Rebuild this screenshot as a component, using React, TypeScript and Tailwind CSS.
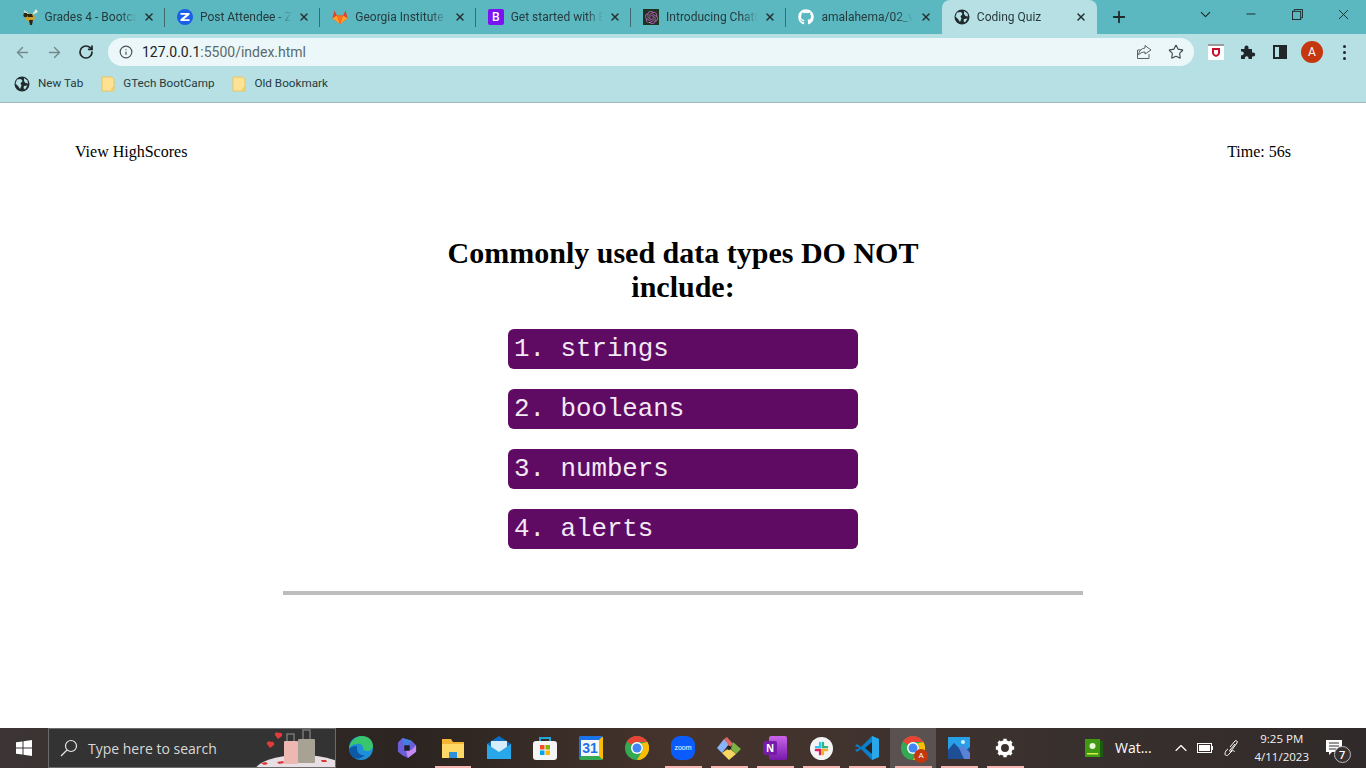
import { FC, ReactNode } from 'react';
import { FaGithub } from 'react-icons/fa';
import { SiOpenai } from 'react-icons/si';
import { ArrowLeft, ArrowRight, ChevronDown, ChevronUp, Info, Minus, Plus, RotateCw, Star, X } from 'lucide-react';

const Globe: FC = () => (
  <svg viewBox="0 0 16 16" className="h-4 w-4 shrink-0">
    <circle cx="8" cy="8" r="7.5" fill="#202b2d" />
    <path d="M3 3.500 7 3 8.500 5 6.500 7.500 7.500 9.500 6 13 4 10 1.500 7.500ZM10 2l3.500 2.500.5 3-2.500-.5L10 5ZM10 10l3.500-.5L11 13.500 9.500 12Z" fill="#b7e0e4" />
  </svg>
);

const Bee: FC = () => (
  <svg viewBox="0 0 16 16" className="h-4 w-4 shrink-0">
    <path d="M2 1 7 5 3 5ZM14 0 16 3 10 6Z" fill="#e9edd8" />
    <ellipse cx="8" cy="8.500" rx="5" ry="4" fill="#c9a02f" />
    <path d="M5 5h5l1 3H6ZM7 11h4l-1 5H8Z" fill="#2a2413" />
    <circle cx="3.500" cy="6" r="2.200" fill="#2a2413" />
  </svg>
);

const Zoomish: FC = () => (
  <svg viewBox="0 0 16 16" className="h-4 w-4 shrink-0">
    <circle cx="8" cy="8" r="8" fill="#1b5fe8" />
    <path d="M3.500 4h9v1.800L7 10.200h5.500V12h-9v-1.800L9 5.800H3.500Z" fill="#fff" />
  </svg>
);

const Gitlab: FC = () => (
  <svg viewBox="0 0 16 16" className="h-4 w-4 shrink-0">
    <path d="M8 15 .3 9.200 2.500 1.500 5 6.500h6l2.500-5L15.700 9.200Z" fill="#e24329" />
    <path d="M8 15 .3 9.200 5 6.500Z" fill="#fca326" />
    <path d="M8 15 15.700 9.200 11 6.500Z" fill="#fca326" />
    <path d="M8 15 5 6.500h6Z" fill="#fc6d26" />
  </svg>
);

const Boot: FC = () => (
  <div className="flex h-4 w-4 shrink-0 items-center justify-center rounded-[2px] bg-[#7b12f0] font-['Open_Sans',sans-serif] text-[12px] leading-none font-semibold text-white">
    B
  </div>
);

const Gpt: FC = () => (
  <div className="flex h-4 w-4 shrink-0 items-center justify-center bg-[#1d3320]">
    <SiOpenai className="h-[13px] w-[13px] text-[#b65fb5]" />
  </div>
);

const Tab: FC<{ icon: ReactNode; title: string; active?: boolean; sep?: boolean }> = ({ icon, title, active, sep }) => (
  <div
    className={`relative flex h-[34px] w-[155.4px] shrink-0 items-center pr-[10px] pl-3 ${active ? 'rounded-t-lg bg-[#b7e0e4]' : ''}`}
  >
    {icon}
    <span className="ml-[7px] w-[92px] overflow-hidden text-[12px] whitespace-nowrap text-[#263a3d] [mask-image:linear-gradient(90deg,#000_82%,transparent)]">
      {title}
    </span>
    <X className="ml-auto h-3 w-3 text-[#263033]" strokeWidth={3} />
    {sep && <div className="absolute top-2 right-0 h-[19px] w-px bg-[#3f6a6e]" />}
  </div>
);

const tabs = [
  { icon: <Bee />, title: 'Grades 4 - Bootcamp' },
  { icon: <Zoomish />, title: 'Post Attendee - Zoom' },
  { icon: <Gitlab />, title: 'Georgia Institute of' },
  { icon: <Boot />, title: 'Get started with Bootstrap' },
  { icon: <Gpt />, title: 'Introducing ChatGPT' },
  { icon: <FaGithub className="h-4 w-4 shrink-0 text-white" />, title: 'amalahema/02_web' },
];

const WinBtn: FC<{ children: ReactNode }> = ({ children }) => (
  <div className="flex h-[28px] w-[46px] items-center justify-center">{children}</div>
);

const TabStrip: FC = () => (
  <div className="flex h-[34px] items-center bg-[#5cb8c0] pl-[9.500px]">
    {tabs.map((t, i) => (
      <Tab key={t.title} icon={t.icon} title={t.title} sep={i < 5} />
    ))}
    <Tab icon={<Globe />} title="Coding Quiz" active />
    <Plus className="ml-[13px] h-[18px] w-[18px] text-[#1f2a2c]" strokeWidth={2.4} />
    <div className="ml-auto flex h-full items-start">
      <WinBtn>
        <ChevronDown className="h-[17px] w-[17px] text-[#1a2426]" strokeWidth={1.5} />
      </WinBtn>
      <WinBtn>
        <Minus className="h-4 w-[14px] text-[#1a2426]" strokeWidth={1.6} />
      </WinBtn>
      <WinBtn>
        <svg viewBox="0 0 12 12" className="h-[11px] w-[11px]" fill="none" stroke="#1a2426">
          <rect x=".5" y="2.500" width="9" height="9" />
          <path d="M2.500 2.500V.5h9v9h-2" />
        </svg>
      </WinBtn>
      <WinBtn>
        <X className="h-[17px] w-[17px] text-[#1a2426]" strokeWidth={1.3} />
      </WinBtn>
    </div>
  </div>
);

const Toolbar: FC = () => (
  <div className="flex h-[32px] items-center bg-[#b7e0e4] pt-1">
    <div className="flex w-[108px] items-center pl-[14px]">
      <ArrowLeft className="h-[17px] w-[17px] text-[#75898c]" strokeWidth={2} />
      <ArrowRight className="ml-[15px] h-[17px] w-[17px] text-[#75898c]" strokeWidth={2} />
      <RotateCw className="ml-[15px] h-4 w-4 text-[#20282a]" strokeWidth={2.6} />
    </div>
    <div className="flex h-[28px] w-[1086px] items-center rounded-full bg-[#ebf7f8] pr-[10px] pl-[11px]">
      <Info className="h-[14px] w-[14px] text-[#4a5254]" strokeWidth={2} />
      <span className="ml-[9px] text-[14px] text-[#5a6a6d]">
        <span className="text-[#1b2426]">127.0.0.1</span>:5500/index.html
      </span>
      <svg viewBox="0 0 16 16" className="ml-auto h-4 w-4" fill="none" stroke="#5a6265" strokeWidth="1">
        <path d="M5 6H1.500v8.500H13V10M9 1.500 15 6l-6 4V8C6 8 4 9 2.500 11 3 7 5 4.500 9 4Z" />
      </svg>
      <Star className="ml-4 h-4 w-4 text-[#3f4a4c]" strokeWidth={1.7} />
    </div>
    <svg viewBox="0 0 16 16" className="ml-[14px] h-4 w-4 shrink-0">
      <rect width="16" height="16" fill="#fff" />
      <rect width="16" height="2" fill="#9a9a9a" />
      <path d="M4 4h8v5c0 2-2 3-4 4-2-1-4-2-4-4Z" fill="#c8102e" />
      <path d="M6 6h4v3c0 1-1 1.500-2 2-1-.5-2-1-2-2Z" fill="#fff" />
    </svg>
    <svg viewBox="0 0 16 16" className="ml-4 h-4 w-4 shrink-0 fill-[#1f2729]">
      <path d="M1 5h3.500V3.500a2 2 0 0 1 4 0V5H12v3.500h1.200a2 2 0 0 1 0 4H12V15H8.500v-1a1.800 1.800 0 0 0-3.600 0v1H1v-3.800h1a1.800 1.800 0 0 0 0-3.600H1Z" />
    </svg>
    <div className="ml-[17px] flex h-[14px] w-[14px] shrink-0 border-2 border-[#1f2729]">
      <div className="ml-auto h-full w-[6px] bg-[#1f2729]" />
    </div>
    <div className="ml-[14px] flex h-[22px] w-[22px] shrink-0 items-center justify-center rounded-full bg-[#c5370f] text-[12px] text-white">
      A
    </div>
    <div className="ml-[20px] flex flex-col gap-[3px]">
      <div className="h-[3px] w-[3px] rounded-full bg-[#1f2729]" />
      <div className="h-[3px] w-[3px] rounded-full bg-[#1f2729]" />
      <div className="h-[3px] w-[3px] rounded-full bg-[#1f2729]" />
    </div>
  </div>
);

const Folder: FC = () => (
  <svg viewBox="0 0 14 16" className="h-4 w-[14px] shrink-0">
    <path d="M1 1h9.500L13 3v12H1Z" fill="#fde293" stroke="#e8c65a" />
    <path d="M11 15v-3h2" fill="none" stroke="#e8c65a" />
  </svg>
);

const BookmarkBar: FC = () => (
  <div className="flex h-[37px] items-center border-b border-[#9cb9bd] bg-[#b7e0e4] pb-[1px] pl-[14px] text-[11.700px] text-[#263a3d]">
    <Globe />
    <span className="ml-2">New Tab</span>
    <div className="ml-[18px]">
      <Folder />
    </div>
    <span className="ml-2">GTech BootCamp</span>
    <div className="ml-[18px]">
      <Folder />
    </div>
    <span className="ml-2">Old Bookmark</span>
  </div>
);

const answers = ['1. strings', '2. booleans', '3. numbers', '4. alerts'];

const Quiz: FC = () => (
  <div className="h-[625px] overflow-hidden bg-white font-['Liberation_Serif',serif] text-black">
    <div className="flex justify-between px-[75px] pt-[40px] text-[16px] leading-[18px]">
      <span>View HighScores</span>
      <span>Time: 56s</span>
    </div>
    <div className="mx-auto mt-[75px] w-[500px] text-center text-[30px] leading-[34px] font-bold">
      Commonly used data types DO NOT include:
    </div>
    <div className="mt-[25px] flex flex-col items-center gap-5">
      {answers.map((a) => (
        <div
          key={a}
          className="flex h-10 w-[350px] items-center rounded-md bg-[#5f0a63] pt-[2px] pl-[6px] font-['Liberation_Mono',monospace] text-[25.800px] whitespace-pre text-[#f3e8f5]"
        >
          {a}
        </div>
      ))}
    </div>
    <div className="mx-auto mt-[42px] h-1 w-[800px] bg-[#bdbdbd]" />
  </div>
);

const Edge: FC = () => (
  <svg viewBox="0 0 24 24" className="h-6 w-6">
    <circle cx="12" cy="12" r="12" fill="#1e8fd8" />
    <path d="M0 12C1 5 7 0 13 0c6 0 11 4 11 10 0 3-3 5-6 5-2 0-4-1-4-3 0-3-3-5-6-4-4 0-6 2-8 4Z" fill="#39c46e" />
    <path d="M8 13c0 4 4 7 8 6-3 3-8 5-12 2-2-2-4-5-4-8 2-2 4-3 8-3Z" fill="#0c5aa6" />
  </svg>
);

const Copilot: FC = () => (
  <svg viewBox="0 0 22 24" className="h-6 w-5">
    <path d="M6 1 16 4l5 5v7l-9 7-6-3-5-4V6Z" fill="#6a5fd8" />
    <path d="M6 1 16 4l-4 5-5 1Z" fill="#3f7fe0" />
    <path d="M12 23l9-7v-7l-5 5-6 1Z" fill="#c58af0" />
    <path d="M8 9h6v6H8Z" fill="#1f1c2c" />
  </svg>
);

const Files: FC = () => (
  <svg viewBox="0 0 24 24" className="h-6 w-6">
    <path d="M1 3h9l2 3h11v16H1Z" fill="#f2b632" />
    <path d="M1 8h22v14H1Z" fill="#ffd966" />
    <path d="M8 16h8v6H8Z" fill="#2f8fd8" />
  </svg>
);

const Mail: FC = () => (
  <svg viewBox="0 0 24 24" className="h-6 w-6">
    <path d="M12 0 24 8v15H0V8Z" fill="#0a6fc4" />
    <path d="M4 5h16v9l-8 5-8-5Z" fill="#d7eefa" />
    <path d="M0 8l12 8 12-8v15H0Z" fill="#28a8ea" />
  </svg>
);

const Store: FC = () => (
  <svg viewBox="0 0 24 24" className="h-6 w-6">
    <path d="M7 5V2h10v3" fill="none" stroke="#22a6d8" strokeWidth="2" />
    <rect y="5" width="24" height="19" rx="3" fill="#f5f5f5" />
    <rect x="7" y="9" width="4.500" height="4.500" fill="#f25022" />
    <rect x="12.500" y="9" width="4.500" height="4.500" fill="#7fba00" />
    <rect x="7" y="14.500" width="4.500" height="4.500" fill="#00a4ef" />
    <rect x="12.500" y="14.500" width="4.500" height="4.500" fill="#ffb900" />
  </svg>
);

const Calendar: FC = () => (
  <div className="flex h-6 w-6 overflow-hidden rounded-[2px] border-t-[4px] border-r-[4px] border-b-[4px] border-l-[2px] border-t-[#1a73e8] border-r-[#fbbc04] border-b-[#34a853] border-l-[#1a73e8] bg-[#f7f7f7]">
    <div className="flex-1 text-center font-['Liberation_Sans',sans-serif] text-[14px] leading-[16px] font-bold text-[#1a73e8]">31</div>
  </div>
);

const Chrome: FC<{ badge?: boolean }> = ({ badge }) => (
  <div className="relative h-6 w-6">
    <svg viewBox="0 0 24 24" className="h-6 w-6">
      <circle cx="12" cy="12" r="12" fill="#34a853" />
      <path d="M12 0a12 12 0 0 1 10.400 6H12a6 6 0 0 0-5.200 3L2 5.500A12 12 0 0 1 12 0Z" fill="#ea4335" />
      <path d="M22.400 6A12 12 0 0 1 12 24l5.200-9A6 6 0 0 0 16 7.500Z" fill="#fbbc04" />
      <circle cx="12" cy="12" r="6" fill="#fff" />
      <circle cx="12" cy="12" r="4.500" fill="#4285f4" />
    </svg>
    {badge && (
      <div className="absolute -right-[3px] -bottom-[3px] flex h-[14px] w-[14px] items-center justify-center rounded-full bg-[#c5370f] text-[8px] leading-none text-white">
        A
      </div>
    )}
  </div>
);

const ZoomApp: FC = () => (
  <div className="flex h-6 w-6 items-center justify-center rounded-[9px] bg-[#0b5cff] font-['Liberation_Sans',sans-serif] text-[7px] text-white">
    zoom
  </div>
);

const GitApp: FC = () => (
  <svg viewBox="0 0 24 24" className="h-6 w-6">
    <path d="M12 8 7 3 0 12l5 5Z" fill="#8ab4f8" />
    <path d="M7 3l3-2 6 7-3 3Z" fill="#e06666" />
    <path d="M16 6l8 7-5 5-5-5Z" fill="#7cb342" />
    <path d="M5 17l7-5 7 6-7 6Z" fill="#f6d860" />
    <circle cx="12" cy="12" r="2" fill="#222" />
  </svg>
);

const OneNote: FC = () => (
  <div className="relative h-6 w-6">
    <div className="absolute top-0 right-0 h-6 w-[18px] rounded-[2px] bg-[linear-gradient(#ca64ea,#7719aa)]" />
    <div className="absolute top-[5px] left-0 flex h-[14px] w-[14px] items-center justify-center rounded-[2px] bg-[#7719aa] font-['Open_Sans',sans-serif] text-[10px] font-bold text-white">
      N
    </div>
  </div>
);

const SlackApp: FC = () => (
  <div className="flex h-[23px] w-[23px] items-center justify-center rounded-full bg-[#f4f4f4]">
    <svg viewBox="0 0 16 16" className="h-[15px] w-[15px]" fill="none" strokeWidth="2.600" strokeLinecap="round">
      <path d="M6.500 2v4.500H2" stroke="#36c5f0" />
      <path d="M14 6.500H9.500V2" stroke="#2eb67d" />
      <path d="M9.500 14V9.500H14" stroke="#ecb22e" />
      <path d="M2 9.500h4.500V14" stroke="#e01e5a" />
    </svg>
  </div>
);

const VsCode: FC = () => (
  <svg viewBox="0 0 24 24" className="h-6 w-6">
    <path d="M17 0 24 3v18l-7 3L6 13l-4 3-2-2 5-2-5-2 2-2 4 3Z" fill="#0a7fcc" />
    <path d="M17 0 24 3v18l-7 3Z" fill="#28a8ea" />
    <path d="M17 6v12l-7-6Z" fill="#2b2522" />
  </svg>
);

const Photos: FC = () => (
  <svg viewBox="0 0 22 22" className="h-[22px] w-[22px]">
    <rect width="22" height="22" fill="#27a0e8" />
    <circle cx="15" cy="5" r="2" fill="#cfefff" />
    <path d="M0 13 6 6l9 9 7-5v12H0Z" fill="#1e4f96" />
    <path d="M11 11l4-3 7 8v6h-6Z" fill="#5a82d8" />
  </svg>
);

const Gear: FC = () => (
  <svg viewBox="0 0 24 24" className="h-[20px] w-[20px]">
    <circle cx="12" cy="12" r="7" fill="none" stroke="#fff" strokeWidth="4.500" />
    <path d="M12 1v22M1 12h22M4.200 4.200l15.600 15.600M19.800 4.200 4.200 19.800" stroke="#fff" strokeWidth="4" strokeDasharray="4 14" />
  </svg>
);

const slots: { icon: ReactNode; bar?: string; active?: boolean }[] = [
  { icon: <Edge /> },
  { icon: <Copilot /> },
  { icon: <Files />, bar: 'w-[36px]' },
  { icon: <Mail /> },
  { icon: <Store /> },
  { icon: <Calendar /> },
  { icon: <Chrome /> },
  { icon: <ZoomApp />, bar: 'w-[37px]' },
  { icon: <GitApp />, bar: 'w-[37px]' },
  { icon: <OneNote />, bar: 'w-[37px]' },
  { icon: <SlackApp />, bar: 'w-[37px]' },
  { icon: <VsCode />, bar: 'w-[37px]' },
  { icon: <Chrome badge />, bar: 'w-[37px]', active: true },
  { icon: <Photos />, bar: 'w-[37px]' },
  { icon: <Gear />, bar: 'w-[37px]' },
];

const Luggage: FC = () => (
  <svg viewBox="0 0 84 40" className="absolute right-0 bottom-0 h-10 w-[84px]">
    <ellipse cx="50" cy="44" rx="46" ry="16" fill="#e7dfe4" />
    <path d="M36 14V7h7v7M52 12V3h7v9" fill="none" stroke="#777" strokeWidth="1.500" />
    <rect x="33" y="14" width="14" height="23" rx="1" fill="#eeb8b2" />
    <rect x="47" y="12" width="17" height="24" rx="1" fill="#a8a294" />
    <path d="M28 6c-2-2-5 0-4 2l3 4 4-3c1-2-1-4-3-3ZM20 15c-2-2-5 0-4 2l3 4 4-3c1-2-1-4-3-3Z" fill="#e23b3b" />
    <path d="M10 36l5-1 2 2-4 1ZM26 35l6-1 1 2-5 1ZM70 33l5 0 1 2-5 0Z" fill="#d93636" />
  </svg>
);

const Taskbar: FC = () => (
  <div className="flex h-10 bg-[linear-gradient(90deg,#3c3535,#2b2420_30%,#46342d_50%,#38302e_80%,#302a2a)] text-white">
    <div className="flex w-[48px] items-center justify-center">
      <svg viewBox="0 0 16 16" className="h-4 w-4 fill-white">
        <path d="M0 2.300 6.500 1.400V7.500H0ZM7.500 1.300 16 0V7.500H7.500ZM0 8.500H6.500V14.600L0 13.700ZM7.500 8.500H16V16L7.500 14.700Z" />
      </svg>
    </div>
    <div className="relative flex h-10 w-[288px] items-center overflow-hidden border border-[#6b6b6b] bg-[#333333] pl-[11px]">
      <svg viewBox="0 0 18 18" className="h-[18px] w-[18px]" fill="none" stroke="#e6e6e6" strokeWidth="1.200">
        <circle cx="11" cy="7" r="5.500" />
        <path d="M7 11 1 17" />
      </svg>
      <span className="ml-[10px] font-['Open_Sans',sans-serif] text-[14px] text-[#d8d8d8]">Type here to search</span>
      <Luggage />
    </div>
    <div className="ml-[2px] flex">
      {slots.map((s, i) => (
        <div key={i} className={`relative flex h-10 w-[46px] items-center justify-center ${s.active ? 'bg-[#5a5250]' : ''}`}>
          {s.icon}
          {s.bar && <div className={`absolute bottom-0 left-[5px] h-[2px] bg-[#f5b5b0] ${s.bar}`} />}
        </div>
      ))}
    </div>
    <div className="ml-[56px] flex items-center">
      <svg viewBox="0 0 20 20" className="h-5 w-5">
        <path d="M1 1h15v18H1Z" fill="#3f9a12" />
        <path d="M16 3h3v16h-3Z" fill="#1d5a10" />
        <circle cx="8.500" cy="8" r="3" fill="#eaf7d8" />
        <path d="M3 15h11v1.500H3Z" fill="#d8ef4a" />
      </svg>
    </div>
    <span className="ml-[11px] self-center font-['Open_Sans',sans-serif] text-[14px] leading-none">Wat...</span>
    <ChevronUp className="ml-[19px] h-5 w-5 self-center" strokeWidth={1.4} />
    <div className="ml-[6px] flex h-[10px] w-[15px] items-center self-center border border-white p-[1px]">
      <div className="h-full w-full bg-white" />
    </div>
    <div className="h-[4px] w-[1px] self-center bg-white" />
    <svg viewBox="0 0 18 18" className="ml-[11px] h-[18px] w-[18px] self-center" fill="none" stroke="#fff" strokeWidth="1">
      <path d="M6 8 11 2c1-1 3 0 2 2L7 12c-1 1-2 0-1-1l5-6M4 10c-2 1-3 3-3 5s3 2 4 0l3-3c1-1 3 0 2 1" />
    </svg>
    <div className="ml-[8px] flex w-[64px] flex-col items-center font-['Open_Sans',sans-serif] text-[11.500px] leading-[18px] text-[#f2f2f2]">
      <span className="mt-[2px]">9:25 PM</span>
      <span>4/11/2023</span>
    </div>
    <div className="relative ml-[9px] h-10 w-[26px]">
      <svg viewBox="0 0 18 16" className="absolute top-[12px] left-[3px] h-4 w-[18px]">
        <path d="M0 0h16v12H6l-3 3v-3H0Z" fill="#fff" />
        <path d="M3 3h10M3 6h10M3 9h7" stroke="#333" />
      </svg>
      <div className="absolute top-[18px] left-[11px] flex h-[17px] w-[17px] items-center justify-center rounded-full border border-[#bbb] bg-[#3a3232] font-['Open_Sans',sans-serif] text-[11px] leading-none font-semibold">
        7
      </div>
    </div>
  </div>
);

const App: FC = () => {
  return (
    <div className="h-[768px] w-[1366px] overflow-hidden bg-white font-['Roboto',sans-serif]">
      <TabStrip />
      <Toolbar />
      <BookmarkBar />
      <Quiz />
      <Taskbar />
    </div>
  );
};

export default App;
